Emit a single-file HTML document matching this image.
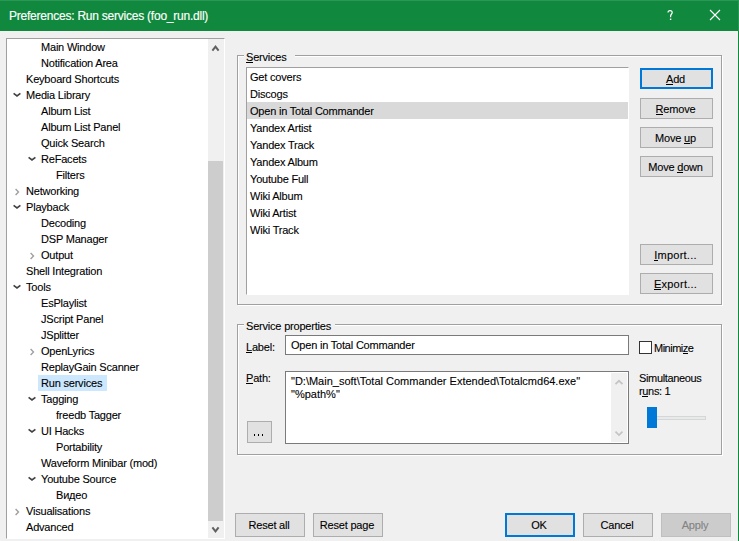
<!DOCTYPE html>
<html><head><meta charset="utf-8">
<style>
*{box-sizing:border-box;margin:0;padding:0}
html,body{width:739px;height:541px;overflow:hidden;background:#f0f0f0}
body{position:relative;font-family:"Liberation Sans",sans-serif;font-size:11px;color:#000;letter-spacing:-0.2px;-webkit-text-stroke:0.1px #000}
.a{position:absolute}
.t{position:absolute;white-space:nowrap;line-height:16px;height:16px}
.btn{position:absolute;background:#e1e1e1;border:1px solid #adadad;padding-right:2px;display:flex;align-items:center;justify-content:center;white-space:nowrap;line-height:16px}
.def{border:2px solid #0078d7}
u{text-decoration:none;border-bottom:1px solid #000;display:inline-block;line-height:10px}
</style></head><body>
<div class="a" style="left:0;top:0;width:739px;height:31px;background:#10893e"></div><div class="a" style="left:0;top:0;width:739px;height:1px;background:#2c9656"></div><div class="a" style="left:738px;top:0;width:1px;height:31px;background:#2c9656"></div><div class="a" style="left:738px;top:31px;width:1px;height:510px;background:#10893e"></div><div class="t" style="left:9px;top:8px;font-size:12px;letter-spacing:-0.23px;color:#fff;-webkit-text-stroke:0.15px #fff">Preferences: Run services (foo_run.dll)</div><svg class="a" style="left:660px;top:5px" width="20" height="20" viewBox="660 5 20 20"><path d="M668 12.6C668 11 669 10.6 670.1 10.6C671.3 10.6 672.2 11.3 672.2 12.6C672.2 14.1 670.6 14.4 670.6 16V17.3" stroke="#fff" stroke-width="1.2" fill="none"/><rect x="669.9" y="18.6" width="1.4" height="1.4" fill="#fff"/></svg><svg class="a" style="left:709px;top:9px" width="12" height="12" viewBox="0 0 12 12"><path d="M1 1L11 11M11 1L1 11" stroke="#fff" stroke-width="1.1" fill="none"/></svg><div class="a" style="left:6px;top:38px;width:219px;height:501px;background:#fff;border-top:1px solid #a0a0a0;border-left:1px solid #a0a0a0;border-right:1px solid #fff;border-bottom:1px solid #fff"></div><div class="a" style="left:208px;top:39px;width:16px;height:499px;background:#f0f0f0"></div><div class="a" style="left:208px;top:161px;width:15px;height:360px;background:#cdcdcd"></div><svg class="a" style="left:208px;top:39px" width="16" height="17" viewBox="0 0 16 17"><path d="M4.4 11.6L7.5 7.6L10.6 11.6" stroke="#606060" stroke-width="2" fill="none"/></svg><svg class="a" style="left:208px;top:520px" width="16" height="17" viewBox="0 0 16 17"><path d="M4.4 7.4L7.5 11.4L10.6 7.4" stroke="#606060" stroke-width="2" fill="none"/></svg><div class="t" style="left:41px;top:39px">Main Window</div><div class="t" style="left:41px;top:55px">Notification Area</div><div class="t" style="left:26px;top:71px">Keyboard Shortcuts</div><svg class="a" style="left:13px;top:87px" width="10" height="16" viewBox="0 0 10 16"><path d="M0.6 6.4L4 9L7.4 6.4" stroke="#404040" stroke-width="1.6" fill="none"/></svg><div class="t" style="left:26px;top:87px">Media Library</div><div class="t" style="left:41px;top:103px">Album List</div><div class="t" style="left:41px;top:119px">Album List Panel</div><div class="t" style="left:41px;top:135px">Quick Search</div><svg class="a" style="left:28px;top:151px" width="10" height="16" viewBox="0 0 10 16"><path d="M0.6 6.4L4 9L7.4 6.4" stroke="#404040" stroke-width="1.6" fill="none"/></svg><div class="t" style="left:41px;top:151px">ReFacets</div><div class="t" style="left:56px;top:167px">Filters</div><svg class="a" style="left:13px;top:183px" width="10" height="16" viewBox="0 0 10 16"><path d="M2.6 5.9L5.5 8.9L2.6 11.9" stroke="#a0a0a0" stroke-width="1.4" fill="none"/></svg><div class="t" style="left:26px;top:183px">Networking</div><svg class="a" style="left:13px;top:199px" width="10" height="16" viewBox="0 0 10 16"><path d="M0.6 6.4L4 9L7.4 6.4" stroke="#404040" stroke-width="1.6" fill="none"/></svg><div class="t" style="left:26px;top:199px">Playback</div><div class="t" style="left:41px;top:215px">Decoding</div><div class="t" style="left:41px;top:231px">DSP Manager</div><svg class="a" style="left:28px;top:247px" width="10" height="16" viewBox="0 0 10 16"><path d="M2.6 5.9L5.5 8.9L2.6 11.9" stroke="#a0a0a0" stroke-width="1.4" fill="none"/></svg><div class="t" style="left:41px;top:247px">Output</div><div class="t" style="left:26px;top:263px">Shell Integration</div><svg class="a" style="left:13px;top:279px" width="10" height="16" viewBox="0 0 10 16"><path d="M0.6 6.4L4 9L7.4 6.4" stroke="#404040" stroke-width="1.6" fill="none"/></svg><div class="t" style="left:26px;top:279px">Tools</div><div class="t" style="left:41px;top:295px">EsPlaylist</div><div class="t" style="left:41px;top:311px">JScript Panel</div><div class="t" style="left:41px;top:327px">JSplitter</div><svg class="a" style="left:28px;top:343px" width="10" height="16" viewBox="0 0 10 16"><path d="M2.6 5.9L5.5 8.9L2.6 11.9" stroke="#a0a0a0" stroke-width="1.4" fill="none"/></svg><div class="t" style="left:41px;top:343px">OpenLyrics</div><div class="t" style="left:41px;top:359px">ReplayGain Scanner</div><div class="a" style="left:38px;top:375px;width:69px;height:16px;background:#cce8ff"></div><div class="t" style="left:41px;top:375px">Run services</div><svg class="a" style="left:28px;top:391px" width="10" height="16" viewBox="0 0 10 16"><path d="M0.6 6.4L4 9L7.4 6.4" stroke="#404040" stroke-width="1.6" fill="none"/></svg><div class="t" style="left:41px;top:391px">Tagging</div><div class="t" style="left:56px;top:407px">freedb Tagger</div><svg class="a" style="left:28px;top:423px" width="10" height="16" viewBox="0 0 10 16"><path d="M0.6 6.4L4 9L7.4 6.4" stroke="#404040" stroke-width="1.6" fill="none"/></svg><div class="t" style="left:41px;top:423px">UI Hacks</div><div class="t" style="left:56px;top:439px">Portability</div><div class="t" style="left:41px;top:455px">Waveform Minibar (mod)</div><svg class="a" style="left:28px;top:471px" width="10" height="16" viewBox="0 0 10 16"><path d="M0.6 6.4L4 9L7.4 6.4" stroke="#404040" stroke-width="1.6" fill="none"/></svg><div class="t" style="left:41px;top:471px">Youtube Source</div><div class="t" style="left:56px;top:487px">Видео</div><svg class="a" style="left:13px;top:503px" width="10" height="16" viewBox="0 0 10 16"><path d="M2.6 5.9L5.5 8.9L2.6 11.9" stroke="#a0a0a0" stroke-width="1.4" fill="none"/></svg><div class="t" style="left:26px;top:503px">Visualisations</div><div class="t" style="left:26px;top:519px">Advanced</div><div class="a" style="left:237px;top:55px;width:485px;height:250px;border:1px solid #a0a0a0;box-shadow:inset 1px 1px 0 #fff, 1px 1px 0 #fff"></div><div class="t" style="left:244px;top:49px;width:51px;background:#f0f0f0;padding-left:2px"><u style="border-color:#000">S</u>ervices</div><div class="a" style="left:246px;top:67px;width:383px;height:228px;background:#fff;border-top:1px solid #a0a0a0;border-left:1px solid #a0a0a0;border-right:1px solid #fff;border-bottom:1px solid #fff"></div><div class="t" style="left:250px;top:69px">Get covers</div><div class="t" style="left:250px;top:86px">Discogs</div><div class="a" style="left:247px;top:102px;width:381px;height:17px;background:#d9d9d9"></div><div class="t" style="left:250px;top:103px">Open in Total Commander</div><div class="t" style="left:250px;top:120px">Yandex Artist</div><div class="t" style="left:250px;top:137px">Yandex Track</div><div class="t" style="left:250px;top:154px">Yandex Album</div><div class="t" style="left:250px;top:171px">Youtube Full</div><div class="t" style="left:250px;top:188px">Wiki Album</div><div class="t" style="left:250px;top:205px">Wiki Artist</div><div class="t" style="left:250px;top:222px">Wiki Track</div><div class="btn def" style="left:640px;top:68px;width:73px;height:21px"><span><u>A</u>dd</span></div><div class="btn " style="left:640px;top:98px;width:73px;height:21px"><span><u>R</u>emove</span></div><div class="btn " style="left:640px;top:127px;width:73px;height:21px"><span>Move <u>u</u>p</span></div><div class="btn " style="left:640px;top:156px;width:73px;height:21px"><span>Move <u>d</u>own</span></div><div class="btn " style="left:640px;top:244px;width:73px;height:21px"><span><span style="letter-spacing:0.25px"><u>I</u>mport...</span></span></div><div class="btn " style="left:640px;top:273px;width:73px;height:21px"><span><span style="letter-spacing:0.25px"><u>E</u>xport...</span></span></div><div class="a" style="left:237px;top:324px;width:485px;height:131px;border:1px solid #a0a0a0;box-shadow:inset 1px 1px 0 #fff, 1px 1px 0 #fff"></div><div class="t" style="left:244px;top:318px;width:91px;background:#f0f0f0;padding-left:2px">Service properties</div><div class="t" style="left:246px;top:339px"><u>L</u>abel:</div><div class="a" style="left:285px;top:335px;width:344px;height:20px;background:#fff;border:1px solid #7a7a7a"></div><div class="t" style="left:291px;top:337px">Open in Total Commander</div><div class="a" style="left:639px;top:341px;width:13px;height:13px;background:#fff;border:1px solid #333"></div><div class="t" style="left:654px;top:340px;letter-spacing:-0.5px">Minimi<u>z</u>e</div><div class="t" style="left:246px;top:370px"><u>P</u>ath:</div><div class="a" style="left:285px;top:371px;width:344px;height:73px;background:#fff;border:1px solid #7a7a7a"></div><div class="a" style="left:611px;top:373px;width:16px;height:69px;background:#f0f0f0"></div><svg class="a" style="left:611px;top:373px" width="16" height="17" viewBox="0 0 16 17"><path d="M4.5 11.2L8 7.8L11.5 11.2" stroke="#c4c4c4" stroke-width="1.7" fill="none"/></svg><svg class="a" style="left:611px;top:425px" width="16" height="17" viewBox="0 0 16 17"><path d="M4.5 6.6L8 10L11.5 6.6" stroke="#c4c4c4" stroke-width="1.7" fill="none"/></svg><div class="a" style="left:291px;top:375px;line-height:13px;white-space:nowrap;letter-spacing:0">"D:\Main_soft\Total Commander Extended\Totalcmd64.exe"<br>"%path%"</div><div class="btn " style="left:247px;top:421px;width:25px;height:22px"><span></span></div><div class="a" style="left:254px;top:434px;width:1.2px;height:2px;background:#000"></div><div class="a" style="left:258px;top:434px;width:1.2px;height:2px;background:#000"></div><div class="a" style="left:262px;top:434px;width:1.2px;height:2px;background:#000"></div><div class="a" style="left:639px;top:372px;line-height:13px;white-space:nowrap;letter-spacing:-0.35px">Simultaneous<br>r<u>u</u>ns: 1</div><div class="a" style="left:647px;top:416px;width:59px;height:4px;background:#e7eaea;border:1px solid #d6d6d6"></div><div class="a" style="left:647px;top:407px;width:10px;height:21px;background:#0078d7"></div><div class="btn " style="left:235px;top:513px;width:70px;height:24px"><span>Reset all</span></div><div class="btn " style="left:313px;top:513px;width:70px;height:24px"><span>Reset page</span></div><div class="btn def" style="left:505px;top:513px;width:70px;height:24px"><span>OK</span></div><div class="btn " style="left:583px;top:513px;width:70px;height:24px"><span>Cancel</span></div><div class="btn" style="left:661px;top:513px;width:70px;height:24px;background:#cccccc;border-color:#bfbfbf;color:#838383;-webkit-text-stroke:0.1px #838383">Apply</div></body></html>
